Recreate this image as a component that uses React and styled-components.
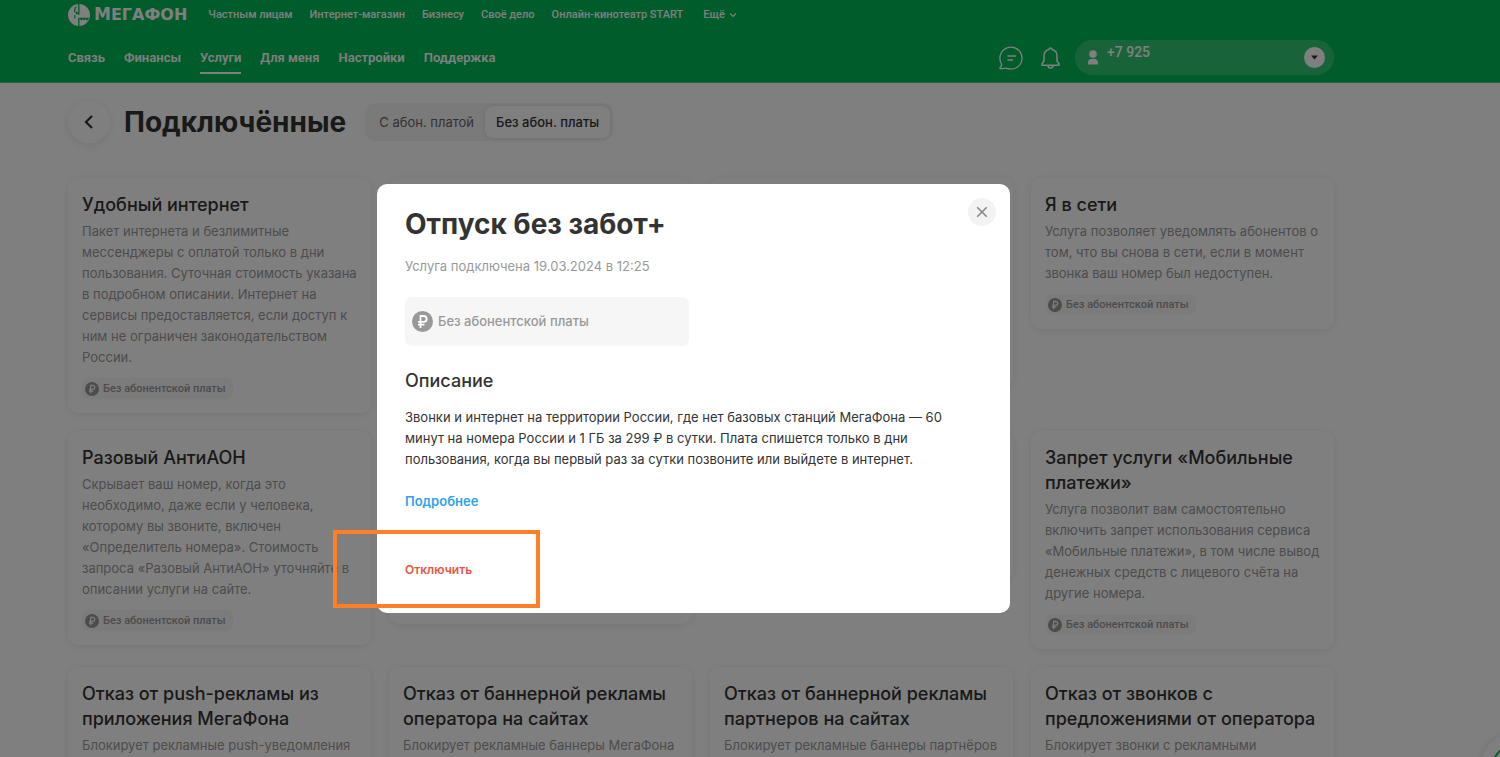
import React from 'react';
import styled, { createGlobalStyle, css } from 'styled-components';

const Global = createGlobalStyle`
  *, *::before, *::after { box-sizing: border-box; }
  body {
    margin: 0;
    overflow: hidden;
    background: #fff;
    color: #333;
    font: 400 13px/21px Inter, "Liberation Sans", sans-serif;
  }
  h1, h2, h3, p { margin: 0; }
  button { border: 0; padding: 0; background: none; font: inherit; color: inherit; cursor: pointer; }
  a { color: inherit; text-decoration: none; }
  svg { display: block; flex: none; }
`;

const Page = styled.div`
  height: 100vh;
  overflow: hidden;
`;

const Header = styled.header`
  padding: 0 166px 0 68px;
  border-bottom: 1px solid #4fc887;
  background: #00b956;
  color: #fff;
  font-family: Roboto, "Liberation Sans", sans-serif;
`;

const TopRow = styled.div`
  display: flex;
  align-items: center;
  gap: 21px;
  height: 29px;
`;

const Logo = styled.a`
  display: flex;
  align-items: center;
  gap: 4px;
`;

const Wordmark = styled.span`
  font: 700 16px/24px "DejaVu Sans", sans-serif;

  &::first-letter { font-size: 17px; }
`;

const TopNav = styled.nav`
  display: flex;
  gap: 17px;
  font-size: 11px;
  font-weight: 500;
`;

const MoreButton = styled.button`
  display: flex;
  align-items: center;
  gap: 4px;
  margin-left: 3px;
`;

const MainRow = styled.div`
  display: flex;
  align-items: center;
  justify-content: space-between;
  height: 53px;
  padding-top: 4px;
`;

const MainNav = styled.nav`
  display: flex;
  gap: 19px;
  font-size: 13px;
  font-weight: 600;
`;

const NavLink = styled.a`
  padding: 4px 0;
  line-height: 20px;
  border: solid transparent;
  border-width: 2px 0;
  ${(p) => p.$active && css`border-bottom-color: #fff;`}
`;

const Tools = styled.div`
  display: flex;
  align-items: center;
`;

const ToolButton = styled.button`
  margin-right: ${(p) => p.$gap}px;
`;

const Account = styled.button`
  display: flex;
  align-items: center;
  gap: 8px;
  width: 259px;
  height: 35px;
  padding: 0 9px 0 12px;
  border-radius: 18px;
  background: rgba(255, 255, 255, 0.2);
  font-size: 14px;
  font-weight: 500;
  text-align: left;
`;

const Phone = styled.span`
  flex: 1;
  align-self: flex-start;
  line-height: 24px;
`;

const Main = styled.main`
  padding: 18px 166px 0 68px;
`;

const PageHead = styled.div`
  display: flex;
  align-items: center;
  margin-bottom: 35px;
`;

const BackButton = styled.button`
  display: grid;
  place-items: center;
  width: 42px;
  height: 42px;
  margin-right: 14px;
  border-radius: 50%;
  background: #fff;
  box-shadow: 0 2px 10px rgba(0, 0, 0, 0.1);
`;

const PageTitle = styled.h1`
  margin-right: 19px;
  font-size: 28px;
  line-height: 34px;
  font-weight: 700;
`;

const Tabs = styled.div`
  display: flex;
  padding: 3px;
  border-radius: 10px;
  background: #f5f5f5;
`;

const Tab = styled.button`
  height: 32px;
  padding: 0 11px;
  border-radius: 8px;
  color: #666;
  ${(p) => p.$active && css`
    background: #fff;
    color: #333;
    font-weight: 500;
    box-shadow: 0 0 6px rgba(0, 0, 0, 0.1);
  `}
`;

const Grid = styled.div`
  display: grid;
  grid-template-columns: repeat(4, 1fr);
  align-items: start;
  gap: 18px;
`;

const CardBox = styled.article`
  display: flex;
  flex-direction: column;
  align-items: flex-start;
  min-height: ${(p) => p.$minHeight || 0}px;
  padding: 14px;
  border-radius: 10px;
  background: #fff;
  box-shadow: 0 1px 9px rgba(0, 0, 0, 0.09);
`;

const CardTitle = styled.h2`
  margin-bottom: 4px;
  font-size: 18px;
  line-height: 25px;
  font-weight: 500;
`;

const CardText = styled.p`
  margin-bottom: 10px;
  color: #999;
`;

const Badge = styled.span`
  display: flex;
  align-items: center;
  gap: 4px;
  padding: 0 7px 0 3px;
  border-radius: 7px;
  background: #f6f6f6;
  color: #999;
  font: 500 11px/21px Roboto, "Liberation Sans", sans-serif;
`;

const ChatWidget = styled.div`
  position: fixed;
  right: -45px;
  bottom: -41px;
  display: grid;
  place-items: center;
  width: 64px;
  height: 64px;
  border-radius: 50%;
  background: #fff;
  box-shadow: 0 0 8px rgba(0, 0, 0, 0.12);
`;

const Overlay = styled.div`
  position: fixed;
  inset: 0;
  display: flex;
  justify-content: center;
  align-items: center;
  padding: 40px 113px 0 0;
  background: rgba(0, 0, 0, 0.5);
`;

const Modal = styled.section`
  position: relative;
  display: flex;
  flex-direction: column;
  align-items: flex-start;
  width: 633px;
  padding: 24px 28px 33px;
  border-radius: 10px;
  background: #fff;
`;

const CloseButton = styled.button`
  position: absolute;
  top: 14px;
  right: 14px;
  display: grid;
  place-items: center;
  width: 28px;
  height: 28px;
  border-radius: 50%;
  background: #f3f3f3;
`;

const ModalTitle = styled.h2`
  margin-bottom: 16px;
  font-size: 28px;
  line-height: 32px;
  font-weight: 700;
`;

const ModalDate = styled.p`
  margin-bottom: 20px;
  color: #999;
`;

const Fee = styled.div`
  display: flex;
  align-items: center;
  gap: 5px;
  width: 284px;
  height: 49px;
  margin-bottom: 22px;
  padding: 0 7px;
  border-radius: 7px;
  background: #f6f6f6;
  color: #999;
  font-weight: 500;
`;

const Subtitle = styled.h3`
  margin-bottom: 14px;
  font-size: 18px;
  line-height: 25px;
  font-weight: 500;
`;

const MoreLink = styled.a`
  margin: 21px 0 48px;
  color: #2ba3ee;
  font-weight: 600;
`;

const OffButton = styled.button`
  color: #e9543f;
  font-size: 12px;
  line-height: 20px;
  font-weight: 600;
`;

const Highlight = styled.div`
  position: absolute;
  left: -44px;
  bottom: 5px;
  width: 207px;
  height: 78px;
  border: 4px solid #ff7f27;
  pointer-events: none;
`;

const LogoMark = () => (
  <svg width="22" height="22" viewBox="0 0 22 22" aria-hidden="true">
    <circle cx="11" cy="11" r="11" fill="#fff" />
    <g stroke="#00b956" fill="none">
      <path d="M10.800 0v11M10.800 14v8" strokeWidth="1.300" />
      <path d="M8.500 3C7.300 3.400 6.800 4.300 6.800 5.500v3M6.800 11v3.500" strokeWidth="1.200" />
    </g>
    <g fill="#00b956">
      <circle cx="8.800" cy="9" r="1.200" />
      <rect x="10.800" y="13.800" width="10.500" height="1" />
      <circle cx="13.400" cy="15" r="1.200" />
      <circle cx="16.200" cy="15" r="1.200" />
      <circle cx="19" cy="15" r="1.200" />
    </g>
  </svg>
);

const ChevronDown = () => (
  <svg width="8" height="8" viewBox="0 0 8 8" fill="none" stroke="#fff" strokeWidth="1.200" aria-hidden="true">
    <path d="M1 2.500l3 3 3-3" />
  </svg>
);

const ChatIcon = () => (
  <svg width="24" height="24" viewBox="0 0 24 24" fill="none" stroke="#fff" strokeWidth="1.300" strokeLinejoin="round" strokeLinecap="round" aria-hidden="true">
    <path d="M2.200 17.200A11 11 0 1 1 7.800 22.300C5.500 21.700 4 23.200 1.300 22.600c-.6-.2-.5-.9 0-1.300 1.200-.9 1.600-2.300.9-4.100z" />
    <path d="M9 10h7.500M9 14h4.500" strokeWidth="1.500" />
  </svg>
);

const BellIcon = () => (
  <svg width="19" height="22" viewBox="0 0 19 22" fill="none" stroke="#fff" strokeWidth="1.500" strokeLinejoin="round" aria-hidden="true">
    <path d="M8 2.400a1.500 1.500 0 0 1 3 0c3.200.8 5 3 5 6.300v5.300l2 2.800v1.400H1v-1.400L3 14V8.700c0-3.300 1.800-5.500 5-6.300z" />
    <path d="M7 18.500a2.500 2.500 0 0 0 5 0" />
  </svg>
);

const PersonIcon = () => (
  <svg width="12" height="15" viewBox="0 0 12 15" fill="#fff" aria-hidden="true">
    <circle cx="6" cy="4" r="3.800" />
    <path d="M1 14.500v-1.700C1 10.300 2.500 8.800 6 8.800s5 1.500 5 4v1.700z" />
  </svg>
);

const AccountArrow = () => (
  <svg width="21" height="21" viewBox="0 0 21 21" aria-hidden="true">
    <circle cx="10.500" cy="10.500" r="10.500" fill="#fff" />
    <path d="M7 8.500h7l-3.500 4z" fill="#333" />
  </svg>
);

const BackIcon = () => (
  <svg width="14" height="16" viewBox="0 0 14 16" fill="none" stroke="#333" strokeWidth="2.200" aria-hidden="true">
    <path d="M10 2L4 8l6 6" />
  </svg>
);

const CloseIcon = () => (
  <svg width="12" height="12" viewBox="0 0 12 12" stroke="#888" strokeWidth="1.600" aria-hidden="true">
    <path d="M1.200 1.200l9.600 9.600M10.800 1.200l-9.600 9.600" />
  </svg>
);

const RubleIcon = ({ size }) => (
  <svg width={size} height={size} viewBox="0 0 21 21" aria-hidden="true">
    <circle cx="10.500" cy="10.500" r="10.500" fill="#999" />
    <path d="M8.500 17V5h3.200a2.900 2.900 0 0 1 0 5.900H6M6 13.700h6.500" fill="none" stroke="#fff" strokeWidth="1.800" />
  </svg>
);

const NO_FEE = 'Без абонентской платы';

const topLinks = ['Частным лицам', 'Интернет-магазин', 'Бизнесу', 'Своё дело', 'Онлайн-кинотеатр START'];
const mainLinks = ['Связь', 'Финансы', 'Услуги', 'Для меня', 'Настройки', 'Поддержка'];

const services = [
  {
    title: 'Удобный интернет',
    text: 'Пакет интернета и безлимитные мессенджеры с оплатой только в дни пользования. Суточная стоимость указана в подробном описании. Интернет на сервисы предоставляется, если доступ к ним не ограничен законодательством России.',
    free: true,
  },
  { minHeight: 210 },
  { minHeight: 210 },
  {
    title: 'Я в сети',
    text: 'Услуга позволяет уведомлять абонентов о том, что вы снова в сети, если в момент звонка ваш номер был недоступен.',
    free: true,
  },
  {
    title: 'Разовый АнтиАОН',
    text: 'Скрывает ваш номер, когда это необходимо, даже если у человека, которому вы звоните, включен «Определитель номера». Стоимость запроса «Разовый АнтиАОН» уточняйте в описании услуги на сайте.',
    free: true,
  },
  { minHeight: 193 },
  { minHeight: 151 },
  {
    title: 'Запрет услуги «Мобильные платежи»',
    text: 'Услуга позволит вам самостоятельно включить запрет использования сервиса «Мобильные платежи», в том числе вывод денежных средств с лицевого счёта на другие номера.',
    free: true,
  },
  { title: 'Отказ от push-рекламы из приложения МегаФона', text: 'Блокирует рекламные push-уведомления', minHeight: 200 },
  { title: 'Отказ от баннерной рекламы оператора на сайтах', text: 'Блокирует рекламные баннеры МегаФона', minHeight: 200 },
  { title: 'Отказ от баннерной рекламы партнеров на сайтах', text: 'Блокирует рекламные баннеры партнёров', minHeight: 200 },
  { title: 'Отказ от звонков с предложениями от оператора', text: 'Блокирует звонки с рекламными', minHeight: 200 },
];

const Card = ({ title, text, free, minHeight }) => (
  <CardBox $minHeight={minHeight}>
    {title && <CardTitle>{title}</CardTitle>}
    {text && <CardText>{text}</CardText>}
    {free && (
      <Badge>
        <RubleIcon size={14} />
        {NO_FEE}
      </Badge>
    )}
  </CardBox>
);

export default function App() {
  return (
    <>
      <Global />
      <Page>
        <Header>
          <TopRow>
            <Logo href="#">
              <LogoMark />
              <Wordmark>МЕГАФОН</Wordmark>
            </Logo>
            <TopNav>
              {topLinks.map((label) => (
                <a href="#" key={label}>{label}</a>
              ))}
              <MoreButton type="button">
                Ещё
                <ChevronDown />
              </MoreButton>
            </TopNav>
          </TopRow>
          <MainRow>
            <MainNav>
              {mainLinks.map((label) => (
                <NavLink href="#" key={label} $active={label === 'Услуги'}>{label}</NavLink>
              ))}
            </MainNav>
            <Tools>
              <ToolButton type="button" $gap={18} aria-label="Чат"><ChatIcon /></ToolButton>
              <ToolButton type="button" $gap={15} aria-label="Уведомления"><BellIcon /></ToolButton>
              <Account type="button">
                <PersonIcon />
                <Phone>+7 925</Phone>
                <AccountArrow />
              </Account>
            </Tools>
          </MainRow>
        </Header>
        <Main>
          <PageHead>
            <BackButton type="button" aria-label="Назад"><BackIcon /></BackButton>
            <PageTitle>Подключённые</PageTitle>
            <Tabs>
              <Tab type="button">С абон. платой</Tab>
              <Tab type="button" $active>Без абон. платы</Tab>
            </Tabs>
          </PageHead>
          <Grid>
            {services.map((service, i) => (
              <Card key={i} {...service} />
            ))}
          </Grid>
        </Main>
        <ChatWidget>
          <svg width="44" height="44" viewBox="0 0 44 44" fill="none" stroke="#00b956" strokeWidth="2" aria-hidden="true">
            <circle cx="22" cy="22" r="20" />
          </svg>
        </ChatWidget>
      </Page>
      <Overlay>
        <Modal role="dialog" aria-modal="true" aria-labelledby="service-title">
          <CloseButton type="button" aria-label="Закрыть"><CloseIcon /></CloseButton>
          <ModalTitle id="service-title">Отпуск без забот+</ModalTitle>
          <ModalDate>Услуга подключена 19.03.2024 в 12:25</ModalDate>
          <Fee>
            <RubleIcon size={21} />
            {NO_FEE}
          </Fee>
          <Subtitle>Описание</Subtitle>
          <p>
            Звонки и интернет на территории России, где нет базовых станций МегаФона — 60
            минут на номера России и 1 ГБ за 299 ₽ в сутки. Плата спишется только в дни
            пользования, когда вы первый раз за сутки позвоните или выйдете в интернет.
          </p>
          <MoreLink href="#">Подробнее</MoreLink>
          <OffButton type="button">Отключить</OffButton>
          <Highlight />
        </Modal>
      </Overlay>
    </>
  );
}
